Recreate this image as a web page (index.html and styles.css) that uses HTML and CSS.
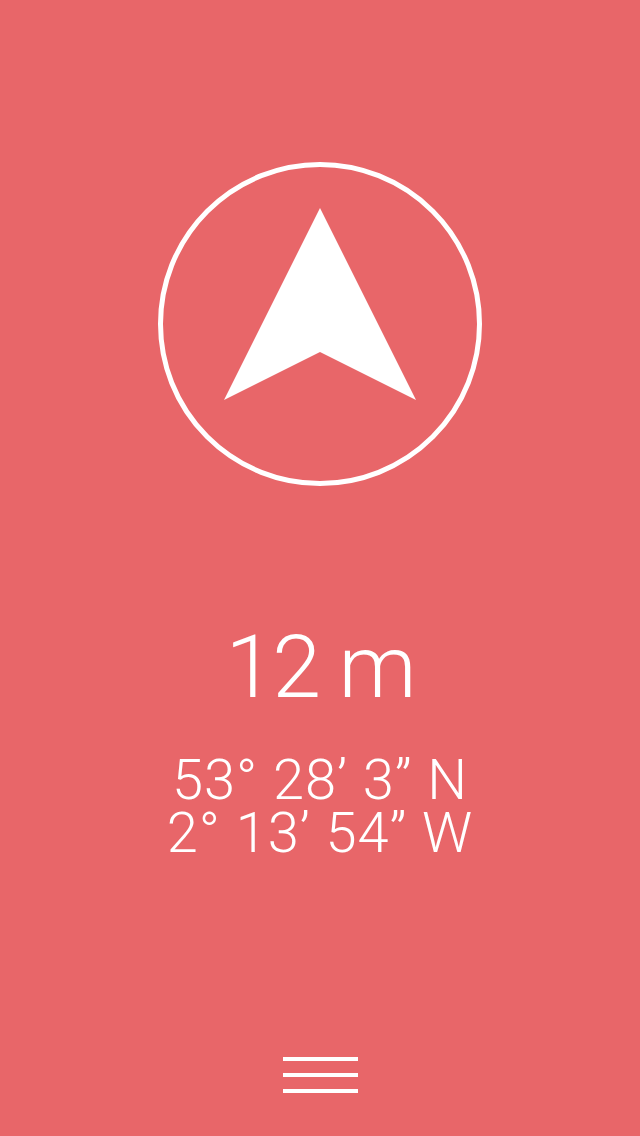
FILE: index.html
```html
<!DOCTYPE html>
<html lang="en">
<head>
    <meta charset="UTF-8">
    <meta name="viewport" content="width=device-width, initial-scale=1.0">
    <title>Compass</title>
    <link rel="stylesheet" href="styles.css">
</head>
<body>
    <div class="screen">
        <!-- direction indicator -->
        <svg class="compass" width="330" height="330" viewBox="0 0 330 330">
            <circle cx="165" cy="165" r="159.5" fill="none" stroke="#fff" stroke-width="5"/>
            <polygon points="165,49 261,241 165,193 69,241" fill="#fff"/>
        </svg>

        <div class="distance">12 m</div>

        <div class="coords">53° 28’ 3” N<br>2° 13’ 54” W</div>

        <div class="menu">
            <span></span>
            <span></span>
            <span></span>
        </div>
    </div>
</body>
</html>
```

FILE: styles.css
```css
body {
    margin: 0;
    background-color: #e86669;
    color: #fff;
    font-family: Roboto, "Noto Sans", sans-serif;
    font-weight: 300;
}

.screen {
    height: 1136px;
    display: flex;
    flex-direction: column;
    align-items: center;
}

.compass {
    display: block;
    margin-top: 159px;
}

.distance {
    margin-top: 134px;
    font-size: 88px;
    line-height: 88px;
    letter-spacing: -2px;
}

.coords {
    margin-top: 43px;
    font-size: 56px;
    line-height: 53px;
    letter-spacing: 1px;
    text-align: center;
}

.menu {
    margin-top: auto;
    margin-bottom: 43px;
    width: 75px;
    display: flex;
    flex-direction: column;
    gap: 12px;
}

.menu span {
    display: block;
    height: 4px;
    background-color: #fff;
}
```
